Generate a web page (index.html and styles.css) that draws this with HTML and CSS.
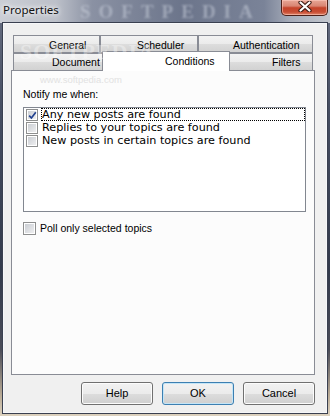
FILE: index.html
```html
<!DOCTYPE html>
<html lang="en">
<head>
    <meta charset="UTF-8">
    <title>Properties</title>
    <link rel="stylesheet" href="styles.css">
</head>
<body>
    <div class="window">
        <div class="titlebar">
            <span class="title">Properties</span>
            <span class="title-mark">SOFTPEDIA</span>
            <button class="close-btn">
                <svg width="14" height="11" viewBox="0 0 14 11">
                    <path d="M2.5 1.5 L11.5 9.5 M11.5 1.5 L2.5 9.5" stroke="#3a1710" stroke-width="4.2" stroke-linecap="round"/>
                    <path d="M2.5 1.5 L11.5 9.5 M11.5 1.5 L2.5 9.5" stroke="#fff" stroke-width="2.2" stroke-linecap="round"/>
                </svg>
            </button>
        </div>

        <div class="client">
            <!-- tab strip, two rows -->
            <div class="tabs">
                <div class="tab-row back-row">
                    <div class="tab tab-general">General</div>
                    <div class="tab tab-scheduler">Scheduler</div>
                    <div class="tab tab-auth">Authentication</div>
                </div>
                <div class="tab-row front-row">
                    <div class="tab tab-document">Document</div>
                    <div class="tab tab-conditions selected">Conditions</div>
                    <div class="tab tab-filters">Filters</div>
                </div>
            </div>

            <div class="page">
                <div class="label">Notify me when:</div>
                <div class="checklist">
                    <div class="item">
                        <span class="checkbox">
                            <svg width="9" height="9" viewBox="0 0 9 9"><path d="M1.2 4.6 L3.4 7 L7.8 1.2" fill="none" stroke="#22418f" stroke-width="1.7"/></svg>
                        </span>
                        <span class="item-text focused">Any new posts are found</span>
                    </div>
                    <div class="item">
                        <span class="checkbox"></span>
                        <span class="item-text">Replies to your topics are found</span>
                    </div>
                    <div class="item">
                        <span class="checkbox"></span>
                        <span class="item-text">New posts in certain topics are found</span>
                    </div>
                </div>
                <div class="poll">
                    <span class="checkbox large"></span>
                    <span class="poll-text">Poll only selected topics</span>
                </div>
            </div>

            <div class="buttons">
                <button class="btn">Help</button>
                <button class="btn default">OK</button>
                <button class="btn">Cancel</button>
            </div>

            <div class="mark-big">SOFTPEDIA</div>
            <div class="mark-small">www.softpedia.com</div>
        </div>
    </div>
</body>
</html>
```

FILE: styles.css
```css
body {
    margin: 0;
    font-family: "Liberation Sans", Arial, sans-serif;
    color: #000;
}

.window {
    width: 330px;
    height: 416px;
    display: flex;
    flex-direction: column;
    overflow: hidden;
    background: linear-gradient(180deg, #6b7285 0, #464e62 25%, #323a4c 65%, #4a4c58 84%, #b9ab96 95%, #ddd2bf 100%);
}

/* title bar */
.titlebar {
    position: relative;
    height: 23px;
    flex: none;
    display: flex;
    align-items: flex-start;
    overflow: hidden;
    background: linear-gradient(90deg, #cbced5 0, #bcc0c9 17%, #8a91a3 28%, #6c758b 55%, #7a8398 80%, #a6acb9 88%, #c3c7ce 100%);
}
.title {
    position: relative;
    z-index: 1;
    padding-left: 3px;
    font-family: "Noto Sans", sans-serif;
    font-size: 11.5px;
    line-height: 20px;
    color: #111;
    text-shadow: 0 0 4px #fff, 0 0 7px #fff;
}
.title-mark {
    position: absolute;
    left: 80px;
    top: 1px;
    font-family: "Liberation Serif", serif;
    font-weight: bold;
    font-size: 19px;
    line-height: 21px;
    letter-spacing: 8px;
    color: rgba(205, 211, 224, 0.5);
    filter: blur(1px);
}
.close-btn {
    position: relative;
    z-index: 1;
    margin-left: auto;
    margin-right: 2px;
    width: 47px;
    height: 16px;
    padding: 1px 0 0;
    display: flex;
    justify-content: center;
    align-items: flex-start;
    border: 1px solid #4d2018;
    border-top: none;
    border-radius: 0 0 5px 5px;
    background: linear-gradient(#e8a696 0, #d98573 40%, #c5432a 52%, #c84d33 80%, #e0866a 100%);
    box-shadow: inset 0 0 0 1px rgba(255, 205, 195, 0.55);
}

/* dialog body */
.client {
    position: relative;
    flex: 1;
    margin: 0 3px 3px;
    padding: 11px 0 0 7px;
    display: flex;
    flex-direction: column;
    border: 1px solid #f6f7f9;
    box-shadow: 0 0 0 1px #3a4050;
    background: #f0f0f0;
}

.tabs {
    margin-left: 2px;
    font-size: 10.5px;
}
.tab-row {
    display: flex;
}
.tab {
    box-sizing: border-box;
    flex: none;
    white-space: nowrap;
    border: 1px solid #898c95;
    background: linear-gradient(#f3f3f3 0, #ebebeb 50%, #dddddd 50%, #d2d2d2 100%);
}
.back-row .tab {
    height: 18px;
    line-height: 15px;
    padding-top: 2px;
}
.front-row .tab {
    height: 17px;
    line-height: 14px;
    padding-top: 1px;
    border-bottom: none;
}
.tab-general { width: 87px; padding-left: 35px; }
.tab-scheduler { width: 98px; padding-left: 36px; }
.tab-auth { width: 115px; padding-left: 34px; }
.tab-document { width: 91px; padding-left: 38px; }
.tab-conditions { width: 124px; padding-left: 62px; }
.tab-filters { width: 85px; padding-left: 43px; }

.front-row .tab.selected {
    position: relative;
    z-index: 1;
    width: 128px;
    height: 20px;
    margin: -2px -2px -1px;
    padding-top: 2px;
    background: #fff;
}

.page {
    box-sizing: border-box;
    width: 304px;
    height: 305px;
    padding: 17px 0 0 11px;
    border: 1px solid #898c95;
    background: #fcfcfc;
}
.label {
    font-size: 10.5px;
    line-height: 13px;
}

.checklist {
    box-sizing: border-box;
    width: 283px;
    height: 105px;
    margin-top: 6px;
    border: 1px solid #828790;
    background: #fff;
}
.item {
    display: flex;
    height: 13px;
}
.item .checkbox {
    margin: 1px 0 0 2px;
}
.item-text {
    flex: 1;
    margin-left: 3px;
    padding-left: 1px;
    font-family: "DejaVu Sans", sans-serif;
    font-size: 11.2px;
    line-height: 13px;
    white-space: nowrap;
}
.item-text.focused {
    outline: 1px dotted #000;
    outline-offset: -1px;
}

.checkbox {
    box-sizing: border-box;
    flex: none;
    width: 12px;
    height: 12px;
    display: flex;
    align-items: center;
    justify-content: center;
    border: 1px solid #8e8f8f;
    background: linear-gradient(135deg, #c6cad0, #f2f2f3);
    box-shadow: inset 0 0 0 1px #fff;
}
.checkbox.large {
    width: 13px;
    height: 13px;
}

.poll {
    display: flex;
    align-items: center;
    height: 13px;
    margin-top: 10px;
}
.poll-text {
    margin-left: 4px;
    font-size: 10.5px;
    line-height: 13px;
}

/* bottom buttons */
.buttons {
    display: flex;
    justify-content: flex-end;
    gap: 9px;
    width: 304px;
    margin-top: 7px;
}
.btn {
    box-sizing: border-box;
    width: 72px;
    height: 23px;
    padding: 0;
    font-family: "Liberation Sans", Arial, sans-serif;
    font-size: 11px;
    line-height: 21px;
    color: #000;
    border: 1px solid #707070;
    border-radius: 3px;
    background: linear-gradient(#f2f2f2 0, #ebebeb 50%, #dddddd 50%, #cfcfcf 100%);
    box-shadow: inset 0 0 0 1px #fcfcfc;
}
.btn.default {
    border-color: #3c7fb1;
    box-shadow: inset 0 0 0 1px #c4e5f7;
}

/* softpedia watermarks */
.mark-big {
    position: absolute;
    z-index: 2;
    left: 16px;
    top: 16px;
    font-family: "Liberation Serif", serif;
    font-weight: bold;
    font-size: 22px;
    line-height: 24px;
    letter-spacing: 1px;
    color: rgba(255, 255, 255, 0.35);
}
.mark-small {
    position: absolute;
    z-index: 2;
    left: 36px;
    top: 51px;
    font-size: 9.5px;
    line-height: 10px;
    color: #e2e2e2;
}
```
